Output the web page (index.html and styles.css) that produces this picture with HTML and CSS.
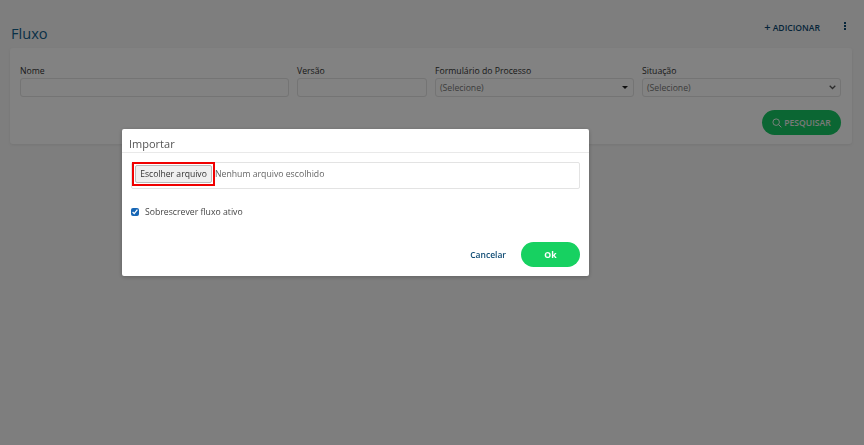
FILE: index.html
```html
<!DOCTYPE html>
<html lang="pt-BR">
<head>
  <meta charset="UTF-8">
  <title>Fluxo</title>
  <link rel="stylesheet" href="styles.css">
</head>
<body>
  <div class="page">
    <div class="top-bar">
      <h1>Fluxo</h1>
      <div class="actions">
        <a class="add-link"><span class="plus">+</span> ADICIONAR</a>
        <span class="more"><i></i><i></i><i></i></span>
      </div>
    </div>

    <div class="filter-card">
      <div class="filter-row">
        <div class="field field-name">
          <label>Nome</label>
          <div class="control"></div>
        </div>
        <div class="field field-version">
          <label>Versão</label>
          <div class="control"></div>
        </div>
        <div class="field field-form">
          <label>Formulário do Processo</label>
          <div class="control select">
            <span>(Selecione)</span>
            <span class="caret"></span>
          </div>
        </div>
        <div class="field field-status">
          <label>Situação</label>
          <div class="control select">
            <span>(Selecione)</span>
            <svg class="chevron" width="7" height="5" viewBox="0 0 10 7"><path d="M1 1l4 4 4-4" fill="none" stroke="#555" stroke-width="1.8"/></svg>
          </div>
        </div>
      </div>
      <div class="filter-footer">
        <button class="search-btn">
          <svg width="10" height="10" viewBox="0 0 12 12"><circle cx="5" cy="5" r="3.9" fill="none" stroke="#fff" stroke-width="1.1"/><path d="M8 8l3.2 3.2" stroke="#fff" stroke-width="1.2"/></svg>
          PESQUISAR
        </button>
      </div>
    </div>
  </div>

  <div class="overlay"></div>

  <div class="modal">
    <div class="modal-title">Importar</div>
    <div class="modal-body">
      <div class="file-box">
        <span class="highlight"><button class="file-btn">Escolher arquivo</button></span>
        <span class="file-name">Nenhum arquivo escolhido</span>
      </div>
      <label class="check-row">
        <input type="checkbox" checked>
        Sobrescrever fluxo ativo
      </label>
    </div>
    <div class="modal-footer">
      <a class="cancel">Cancelar</a>
      <button class="ok-btn">Ok</button>
    </div>
  </div>
</body>
</html>
```

FILE: styles.css
```css
* {
  box-sizing: border-box;
}

html, body {
  height: 100%;
}

body {
  margin: 0;
  overflow: hidden;
  background: #f7f7f7;
  font-family: "Open Sans", sans-serif;
  color: #333;
}

.page {
  padding: 0 12px 0 10px;
}

.top-bar {
  display: flex;
  justify-content: space-between;
  height: 48px;
}

h1 {
  margin: 22px 0 0 1px;
  font-size: 14.6px;
  line-height: 22px;
  font-weight: 500;
  color: #12608c;
}

.actions {
  display: flex;
  align-items: center;
  height: 20px;
  margin-top: 16px;
}

.add-link {
  font-size: 8.6px;
  font-weight: 600;
  color: #0d4a73;
}

.plus {
  font-size: 11px;
}

.more {
  display: flex;
  flex-direction: column;
  gap: 1px;
  margin: 0 6px 0 24px;
}

.more i {
  width: 2px;
  height: 2px;
  background: #0d4a73;
}

.filter-card {
  height: 96px;
  padding: 17px 11px 0 10px;
  background: #fff;
  border-radius: 3px;
  box-shadow: 0 1px 3px rgba(0, 0, 0, 0.08);
}

.filter-row {
  display: flex;
  gap: 8px;
}

.field label {
  display: block;
  font-size: 8.7px;
  line-height: 13px;
  color: #333;
}

.field-name {
  width: 269px;
}

.field-version {
  width: 130px;
}

.field-form {
  width: 199px;
}

.field-status {
  width: 199px;
}

.control {
  display: flex;
  align-items: center;
  justify-content: space-between;
  height: 19px;
  padding: 0 4px;
  border: 1px solid #e3e3e3;
  border-radius: 3px;
  font-size: 8.7px;
  color: #777;
}

.caret {
  width: 0;
  height: 0;
  margin-right: 1px;
  border-left: 3px solid transparent;
  border-right: 3px solid transparent;
  border-top: 3px solid #222;
}

.filter-footer {
  display: flex;
  justify-content: flex-end;
  margin-top: 13px;
}

.search-btn {
  display: flex;
  align-items: center;
  justify-content: center;
  gap: 2px;
  width: 79px;
  height: 25px;
  padding: 0;
  border: 0;
  border-radius: 13px;
  background: #17c964;
  font-family: inherit;
  font-size: 8.6px;
  font-weight: 600;
  color: #eee;
}

.overlay {
  position: fixed;
  inset: 0;
  background: rgba(0, 0, 0, 0.49);
}

.modal {
  position: fixed;
  top: 129px;
  left: 122px;
  width: 467px;
  height: 147px;
  background: #fff;
  border-radius: 2px;
  box-shadow: 0 1px 4px rgba(0, 0, 0, 0.25);
}

.modal-title {
  height: 24px;
  padding: 6px 7px 0;
  border-bottom: 1px solid #e9e9e9;
  font-size: 11px;
  line-height: 17px;
  font-weight: 500;
  color: #555;
}

.modal-body {
  padding: 9px 9px 0;
}

.file-box {
  display: flex;
  align-items: center;
  width: 449px;
  height: 27px;
  border: 1px solid #e3e3e3;
  border-radius: 2px;
}

.highlight {
  display: flex;
  margin-top: -3px;
  padding: 1px;
  border: 2px solid #f00000;
}

.file-btn {
  width: 77px;
  height: 18px;
  padding: 0;
  border: 1px solid #bbb;
  border-radius: 2px;
  background: #efefef;
  font-family: inherit;
  font-size: 8.6px;
  color: #333;
}

.file-name {
  margin-top: -3px;
  font-size: 8.7px;
  color: #666;
}

.check-row {
  display: flex;
  align-items: center;
  gap: 6px;
  margin-top: 16px;
  font-size: 8.7px;
  line-height: 14px;
  color: #444;
}

.check-row input {
  width: 8px;
  height: 8px;
  margin: 0;
  accent-color: #1766b5;
}

.modal-footer {
  display: flex;
  align-items: center;
  justify-content: flex-end;
  gap: 15px;
  margin-top: 23px;
  padding-right: 9px;
}

.cancel {
  font-size: 8.5px;
  font-weight: 600;
  color: #0d4a73;
}

.ok-btn {
  width: 59px;
  height: 25px;
  padding: 0;
  border: 0;
  border-radius: 13px;
  background: #17d161;
  font-family: inherit;
  font-size: 8.7px;
  font-weight: 700;
  color: #fff;
}
```
